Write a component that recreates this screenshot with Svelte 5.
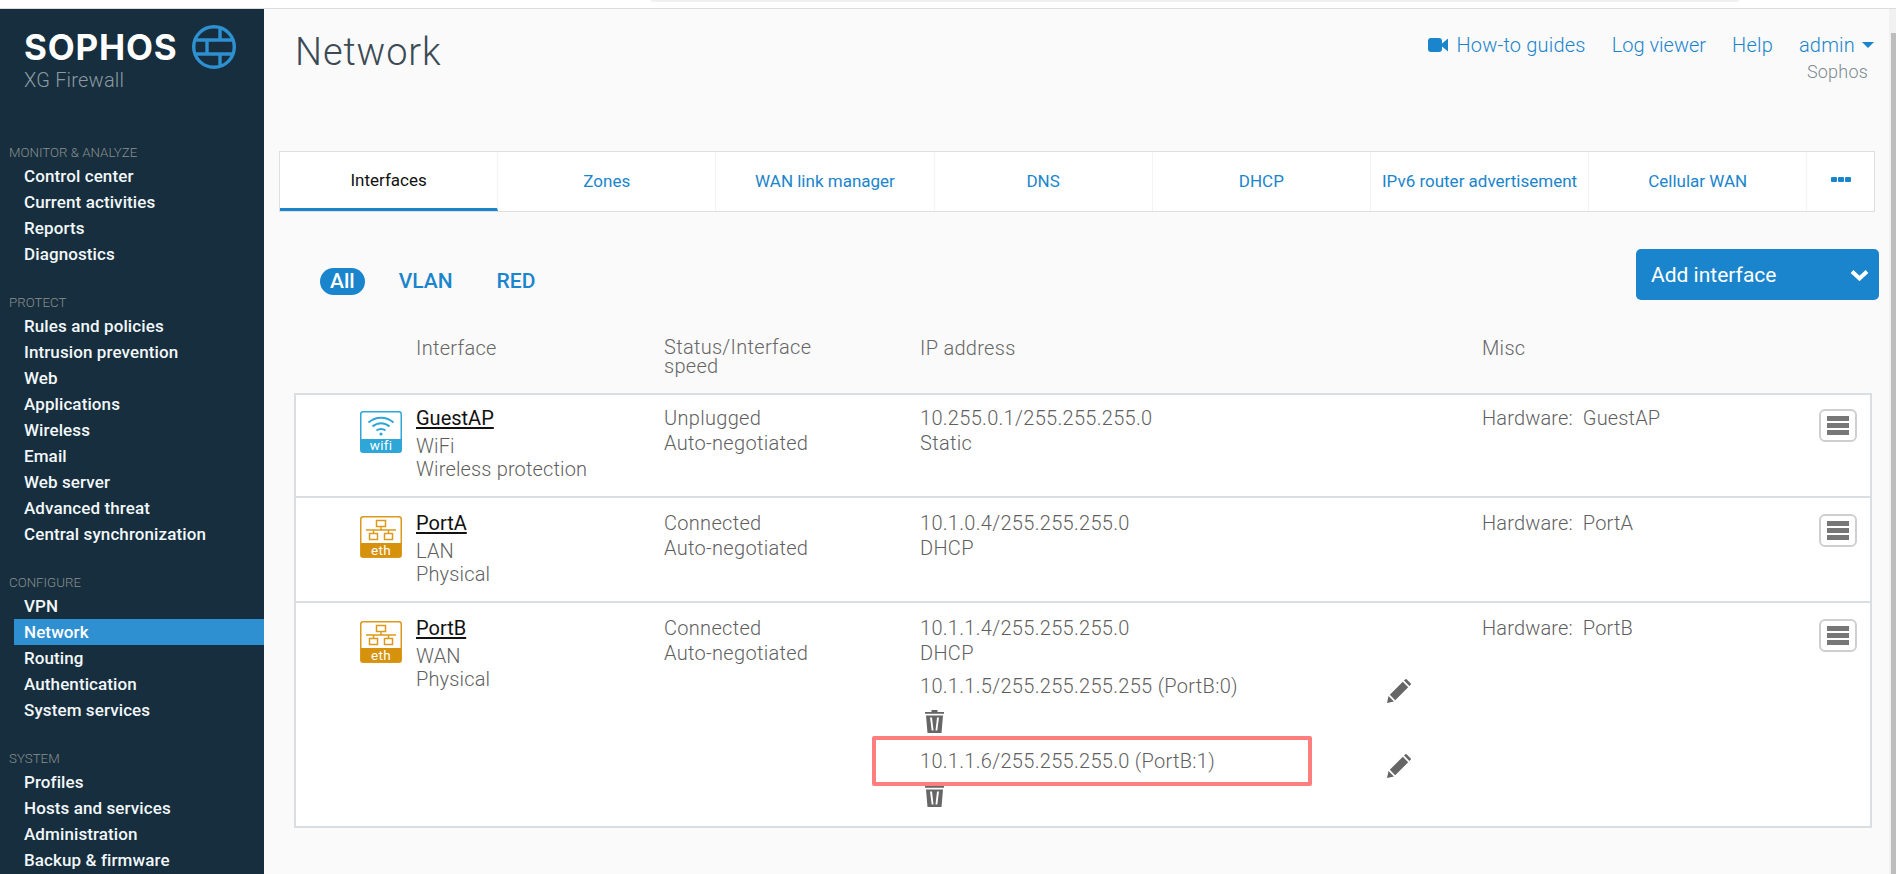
<script>
  const nav = [
    { title: 'MONITOR & ANALYZE', items: ['Control center', 'Current activities', 'Reports', 'Diagnostics'] },
    { title: 'PROTECT', items: ['Rules and policies', 'Intrusion prevention', 'Web', 'Applications', 'Wireless', 'Email', 'Web server', 'Advanced threat', 'Central synchronization'] },
    { title: 'CONFIGURE', items: ['VPN', 'Network', 'Routing', 'Authentication', 'System services'] },
    { title: 'SYSTEM', items: ['Profiles', 'Hosts and services', 'Administration', 'Backup & firmware'] }
  ];
  const tabs = ['Interfaces', 'Zones', 'WAN link manager', 'DNS', 'DHCP', 'IPv6 router advertisement', 'Cellular WAN'];
  const rows = [
    { name: 'GuestAP', kind: 'wifi', sub: ['WiFi', 'Wireless protection'], status: 'Unplugged', ip: '10.255.0.1/255.255.255.0', mode: 'Static' },
    { name: 'PortA', kind: 'eth', sub: ['LAN', 'Physical'], status: 'Connected', ip: '10.1.0.4/255.255.255.0', mode: 'DHCP' },
    { name: 'PortB', kind: 'eth', sub: ['WAN', 'Physical'], status: 'Connected', ip: '10.1.1.4/255.255.255.0', mode: 'DHCP',
      aliases: [{ ip: '10.1.1.5/255.255.255.255 (PortB:0)' }, { ip: '10.1.1.6/255.255.255.0 (PortB:1)', marked: true }] }
  ];
</script>

<div class="top"><div class="pill"></div></div>
<div class="page">
  <aside class="side">
    <div class="brand">
      <div class="logo">
        <span class="word">SOPHOS</span>
        <svg width="46" height="46" viewBox="0 0 46 46" fill="none" stroke="#2e90d1" stroke-width="3.4">
          <circle cx="23" cy="23" r="20.3" />
          <path d="M4 16H42M3 30H43M16 16V30M29 3.5V16M29 30V42.5" />
        </svg>
      </div>
      <div class="product">XG Firewall</div>
    </div>
    {#each nav as sec}
      <div class="sec">
        <div class="sec-title">{sec.title}</div>
        {#each sec.items as it}
          <div class="nav-item" class:active={it === 'Network'}>{it}</div>
        {/each}
      </div>
    {/each}
  </aside>

  <main class="main">
    <header class="head">
      <h1>Network</h1>
      <div class="links">
        <div class="link-row">
          <span class="link guides">
            <svg width="20" height="16" viewBox="0 0 20 16"><rect x="0" y="1" width="14" height="14" rx="3" fill="#1a85cc" /><path d="M14 6.5 20 1.5V14.5L14 9.5Z" fill="#1a85cc" /></svg>
            How-to guides
          </span>
          <span class="link logs">Log viewer</span>
          <span class="link">Help</span>
          <span class="link admin">admin <i class="caret"></i></span>
        </div>
        <div class="org">Sophos</div>
      </div>
    </header>

    <nav class="tabs">
      {#each tabs as t, i}
        <div class="tab" class:current={i === 0}>{t}</div>
      {/each}
      <div class="tab more"><i></i><i></i><i></i></div>
    </nav>

    <div class="filters">
      <span class="chip on">All</span>
      <span class="chip">VLAN</span>
      <span class="chip">RED</span>
      <button class="add">
        Add interface
        <svg width="19" height="12" viewBox="0 0 19 12" fill="none" stroke="#fff" stroke-width="4"><path d="M2 2.5 9.5 9.5 17 2.5" /></svg>
      </button>
    </div>

    <div class="grid thead">
      <div></div>
      <div>Interface</div>
      <div class="speed">Status/Interface speed</div>
      <div>IP address</div>
      <div>Misc</div>
    </div>

    <div class="table">
      {#each rows as r}
        <div class="grid row">
          <div class="ico">
            {#if r.kind === 'wifi'}
              <svg width="42" height="42" viewBox="0 0 42 42">
                <rect x=".75" y=".75" width="40.5" height="40.5" rx="2.5" fill="#fff" stroke="#2ea6d8" stroke-width="1.5" />
                <path d="M1 28H41V39.5A1.5 1.5 0 0 1 39.5 41H2.5A1.5 1.5 0 0 1 1 39.5Z" fill="#2ea6d8" />
                <g fill="none" stroke="#2ea6d8" stroke-width="2"><path d="M8.5 11.5C15.5 5 26.500 5 33.500 11.500" /><path d="M12.500 15.500C17.500 11 24.500 11 29.500 15.500" /><path d="M16.500 19.500C19 17.500 23 17.500 25.500 19.500" /></g>
                <circle cx="21" cy="23" r="1.600" fill="#2ea6d8" />
                <text x="21" y="38.500" class="ico-t">wifi</text>
              </svg>
            {:else}
              <svg width="42" height="42" viewBox="0 0 42 42">
                <rect x=".75" y=".75" width="40.500" height="40.500" rx="2.500" fill="#fff" stroke="#dc9a1c" stroke-width="1.500" />
                <path d="M1 27H41V39.500A1.500 1.500 0 0 1 39.500 41H2.500A1.500 1.500 0 0 1 1 39.500Z" fill="#d6920c" />
                <g fill="none" stroke="#dc9a1c" stroke-width="1.500"><rect x="16.500" y="4.500" width="9" height="6" /><rect x="9.500" y="17.500" width="8" height="6" /><rect x="24.500" y="17.500" width="8" height="6" /><path d="M21 10.500V14M13.500 17.500V14H28.500V17.500M6 14H36" /></g>
                <text x="21" y="38.500" class="ico-t">eth</text>
              </svg>
            {/if}
          </div>
          <div class="iface">
            <div class="name">{r.name}</div>
            {#each r.sub as s}<div class="sub">{s}</div>{/each}
          </div>
          <div class="status">
            <div>{r.status}</div>
            <div>Auto-negotiated</div>
          </div>
          <div class="ip">
            <div>{r.ip}</div>
            <div>{r.mode}</div>
            {#if r.aliases}
              {#each r.aliases as a}
                <div class="alias">
                  <div class="alias-line">
                    <span>{a.ip}</span>
                    <svg class="pencil" width="24" height="24" viewBox="0 0 24 24"><path fill="#666" d="M0 24 1.500 17 7 22.500ZM2.800 15.800 15.800 2.800 21.200 8.200 8.200 21.200ZM17 1.600 18.400.2Q19 -.2 19.600.2L23.800 4.400Q24.200 5 23.800 5.600L22.400 7Z" /></svg>
                  </div>
                  <svg class="trash" width="19" height="23" viewBox="0 0 19 23"><path fill="#666" d="M0 2H6.500V0H12.500V2H19V3.800H0ZM1 5.500H18L16.500 23H2.500ZM5 7.500 6.700 20.500H8.500L7 7.500ZM14 7.500H12L10.500 20.500H12.300Z" fill-rule="evenodd" /></svg>
                  {#if a.marked}<div class="mark"></div>{/if}
                </div>
              {/each}
            {/if}
          </div>
          <div class="misc">Hardware:&nbsp; {r.name}</div>
          <button class="menu" aria-label="menu"><i></i><i></i><i></i></button>
        </div>
      {/each}
    </div>
  </main>
  <div class="scroll"><div class="thumb"></div></div>
</div>

<style>
  :global(body) { margin: 0; background: #fafafa; overflow: hidden; font-family: Roboto, "Noto Sans", sans-serif; }
  .top { height: 8px; background: #fff; border-bottom: 1px solid #dcdcdc; position: relative; overflow: hidden; }
  .pill { position: absolute; left: 650px; right: 156px; top: -6px; height: 8px; background: #f0f0f0; border-radius: 4px; }
  .page { display: flex; height: 865px; overflow: hidden; }
  .side { width: 264px; flex: none; background: #162e3d; color: #fff; overflow: hidden; }
  .brand { height: 134px; padding: 15px 0 0 24px; box-sizing: border-box; }
  .logo { display: flex; align-items: center; gap: 14px; height: 46px; }
  .word { font-family: Inter, sans-serif; font-weight: 700; font-size: 35px; letter-spacing: .8px; line-height: 46px; width: 153px; flex: none; }
  .product { font-size: 20px; color: #8c9aa3; margin: -1px 0 0 0; line-height: 22px; font-weight: 300; letter-spacing: .2px; }
  .sec { margin-bottom: 26px; }
  .sec-title { font-size: 13.300px; color: #8a8f90; padding-left: 9px; line-height: 20px; font-weight: 300; }
  .nav-item { font-size: 17px; font-weight: 500; line-height: 26px; height: 26px; padding-left: 10px; margin-left: 14px; color: #f2f7fa; white-space: nowrap; letter-spacing: .1px; }
  .nav-item.active { background: #2e90d1; color: #fff; }
  .main { flex: 1; min-width: 0; padding-left: 16px; }
  .head { display: flex; justify-content: space-between; height: 142px; padding: 0 22px 0 15px; }
  h1 { margin: 20px 0 0; font-size: 38px; line-height: 46px; font-weight: 300; color: #3b4a55; letter-spacing: .9px; }
  .links { padding-top: 22px; text-align: right; }
  .link-row { display: flex; gap: 26px; align-items: center; height: 28px; }
  .link { color: #1a85cc; font-size: 20px; font-weight: 300; letter-spacing: .2px; white-space: nowrap; }
  .logs { letter-spacing: 0; }
  .guides { display: flex; gap: 8px; align-items: center; }
  .admin { display: flex; gap: 7px; align-items: center; }
  .caret { display: block; width: 0; height: 0; border: 6px solid transparent; border-top: 6px solid #1a85cc; border-bottom: 0; }
  .org { color: #7d8a92; font-size: 18px; font-weight: 300; margin: 1px 6px 0 0; line-height: 24px; letter-spacing: .2px; }
  .tabs { display: flex; height: 61px; width: 1596px; margin-left: -1px; box-sizing: border-box; background: #fff; border: 1px solid #dfdfdf; }
  .tab { width: 218.200px; flex: none; box-sizing: border-box; display: flex; align-items: center; justify-content: center; color: #1a85cc; font-size: 17px; font-weight: 400; border-right: 1px solid #f3f3f3; padding-bottom: 2px; white-space: nowrap; }
  .tab.current { color: #111; border-bottom: 3px solid #1a85cc; padding-bottom: 1px; }
  .tab.more { width: auto; flex: 1; border: 0; gap: 1px; padding-bottom: 4px; }
  .tab.more i { width: 6px; height: 5px; background: #1a85cc; border-radius: 1px; }
  .filters { display: flex; align-items: center; margin-top: 37px; height: 51px; padding-left: 40px; width: 1599px; box-sizing: border-box; }
  .chip { color: #1a85cc; font-size: 21px; font-weight: 500; margin: 13px 44px 0 0; line-height: 27px; }
  .chip.on { background: #1a85cc; color: #fff; padding: 0 10px; border-radius: 14px; margin-right: 34px; }
  .add { margin-left: auto; width: 243px; height: 51px; border: 0; border-radius: 5px; background: #1a85cc; color: #fff; font: 400 21px Roboto, sans-serif; display: flex; justify-content: space-between; align-items: center; padding: 0 10px 0 15px; box-sizing: border-box; }
  .grid { display: grid; grid-template-columns: 120px 248px 256px 562px 337px 38px; align-items: start; }
  .thead { margin-top: 38px; margin-left: 16px; height: 55px; color: #666; font-size: 20px; font-weight: 300; line-height: 20px; letter-spacing: .3px; box-sizing: border-box; }
  .thead .speed { width: 170px; line-height: 19px; }
  .table { margin-left: 14px; width: 1578px; box-sizing: border-box; background: #fff; border: 2px solid #d9dee3; }
  .row { padding-top: 13px; min-height: 105px; border-top: 2px solid #d9dee3; box-sizing: border-box; font-size: 20px; line-height: 25px; color: #5f5f5f; font-weight: 300; letter-spacing: .3px; }
  .row:first-child { border-top: 0; min-height: 101px; padding-top: 11px; }
  .ico { padding: 5px 0 0 64px; }
  .ico svg { display: block; }
  .ico-t { font: 400 13.500px Roboto, sans-serif; fill: #fff; text-anchor: middle; }
  .name { color: #111; font-weight: 400; text-decoration: underline; text-underline-offset: 2px; line-height: 25px; margin-bottom: 4px; font-size: 20px; letter-spacing: 0; }
  .sub { line-height: 23px; letter-spacing: .15px; }
  .misc { letter-spacing: .15px; }
  .alias { position: relative; margin-top: 8px; }
  .alias-line { display: flex; justify-content: space-between; width: 491px; align-items: flex-start; height: 27px; }
  .pencil { margin-top: 5px; }
  .trash { display: block; margin: 9px 0 0 5px; }
  .alias + .alias { margin-top: 16px; }
  .alias + .alias .trash { margin-top: 8px; }
  .mark { position: absolute; left: -48px; top: -13px; width: 440px; height: 50px; box-sizing: border-box; border: 4px solid #ff7f7f; border-radius: 2px; }
  .alias:last-child { padding-bottom: 19px; }
  .menu { width: 38px; height: 33px; margin-top: 3px; border: 2px solid #cfcfcf; border-radius: 6px; background: #fff; padding: 5px 6px; display: flex; flex-direction: column; justify-content: space-between; box-sizing: border-box; }
  .menu i { display: block; height: 5px; background: #777; }
  .scroll { position: absolute; right: 0; top: 9px; bottom: 0; width: 7px; background: #f1f1f1; }
  .thumb { position: absolute; left: 2px; right: 0; top: 24px; bottom: 0; background: #bdbdbd; }
</style>
